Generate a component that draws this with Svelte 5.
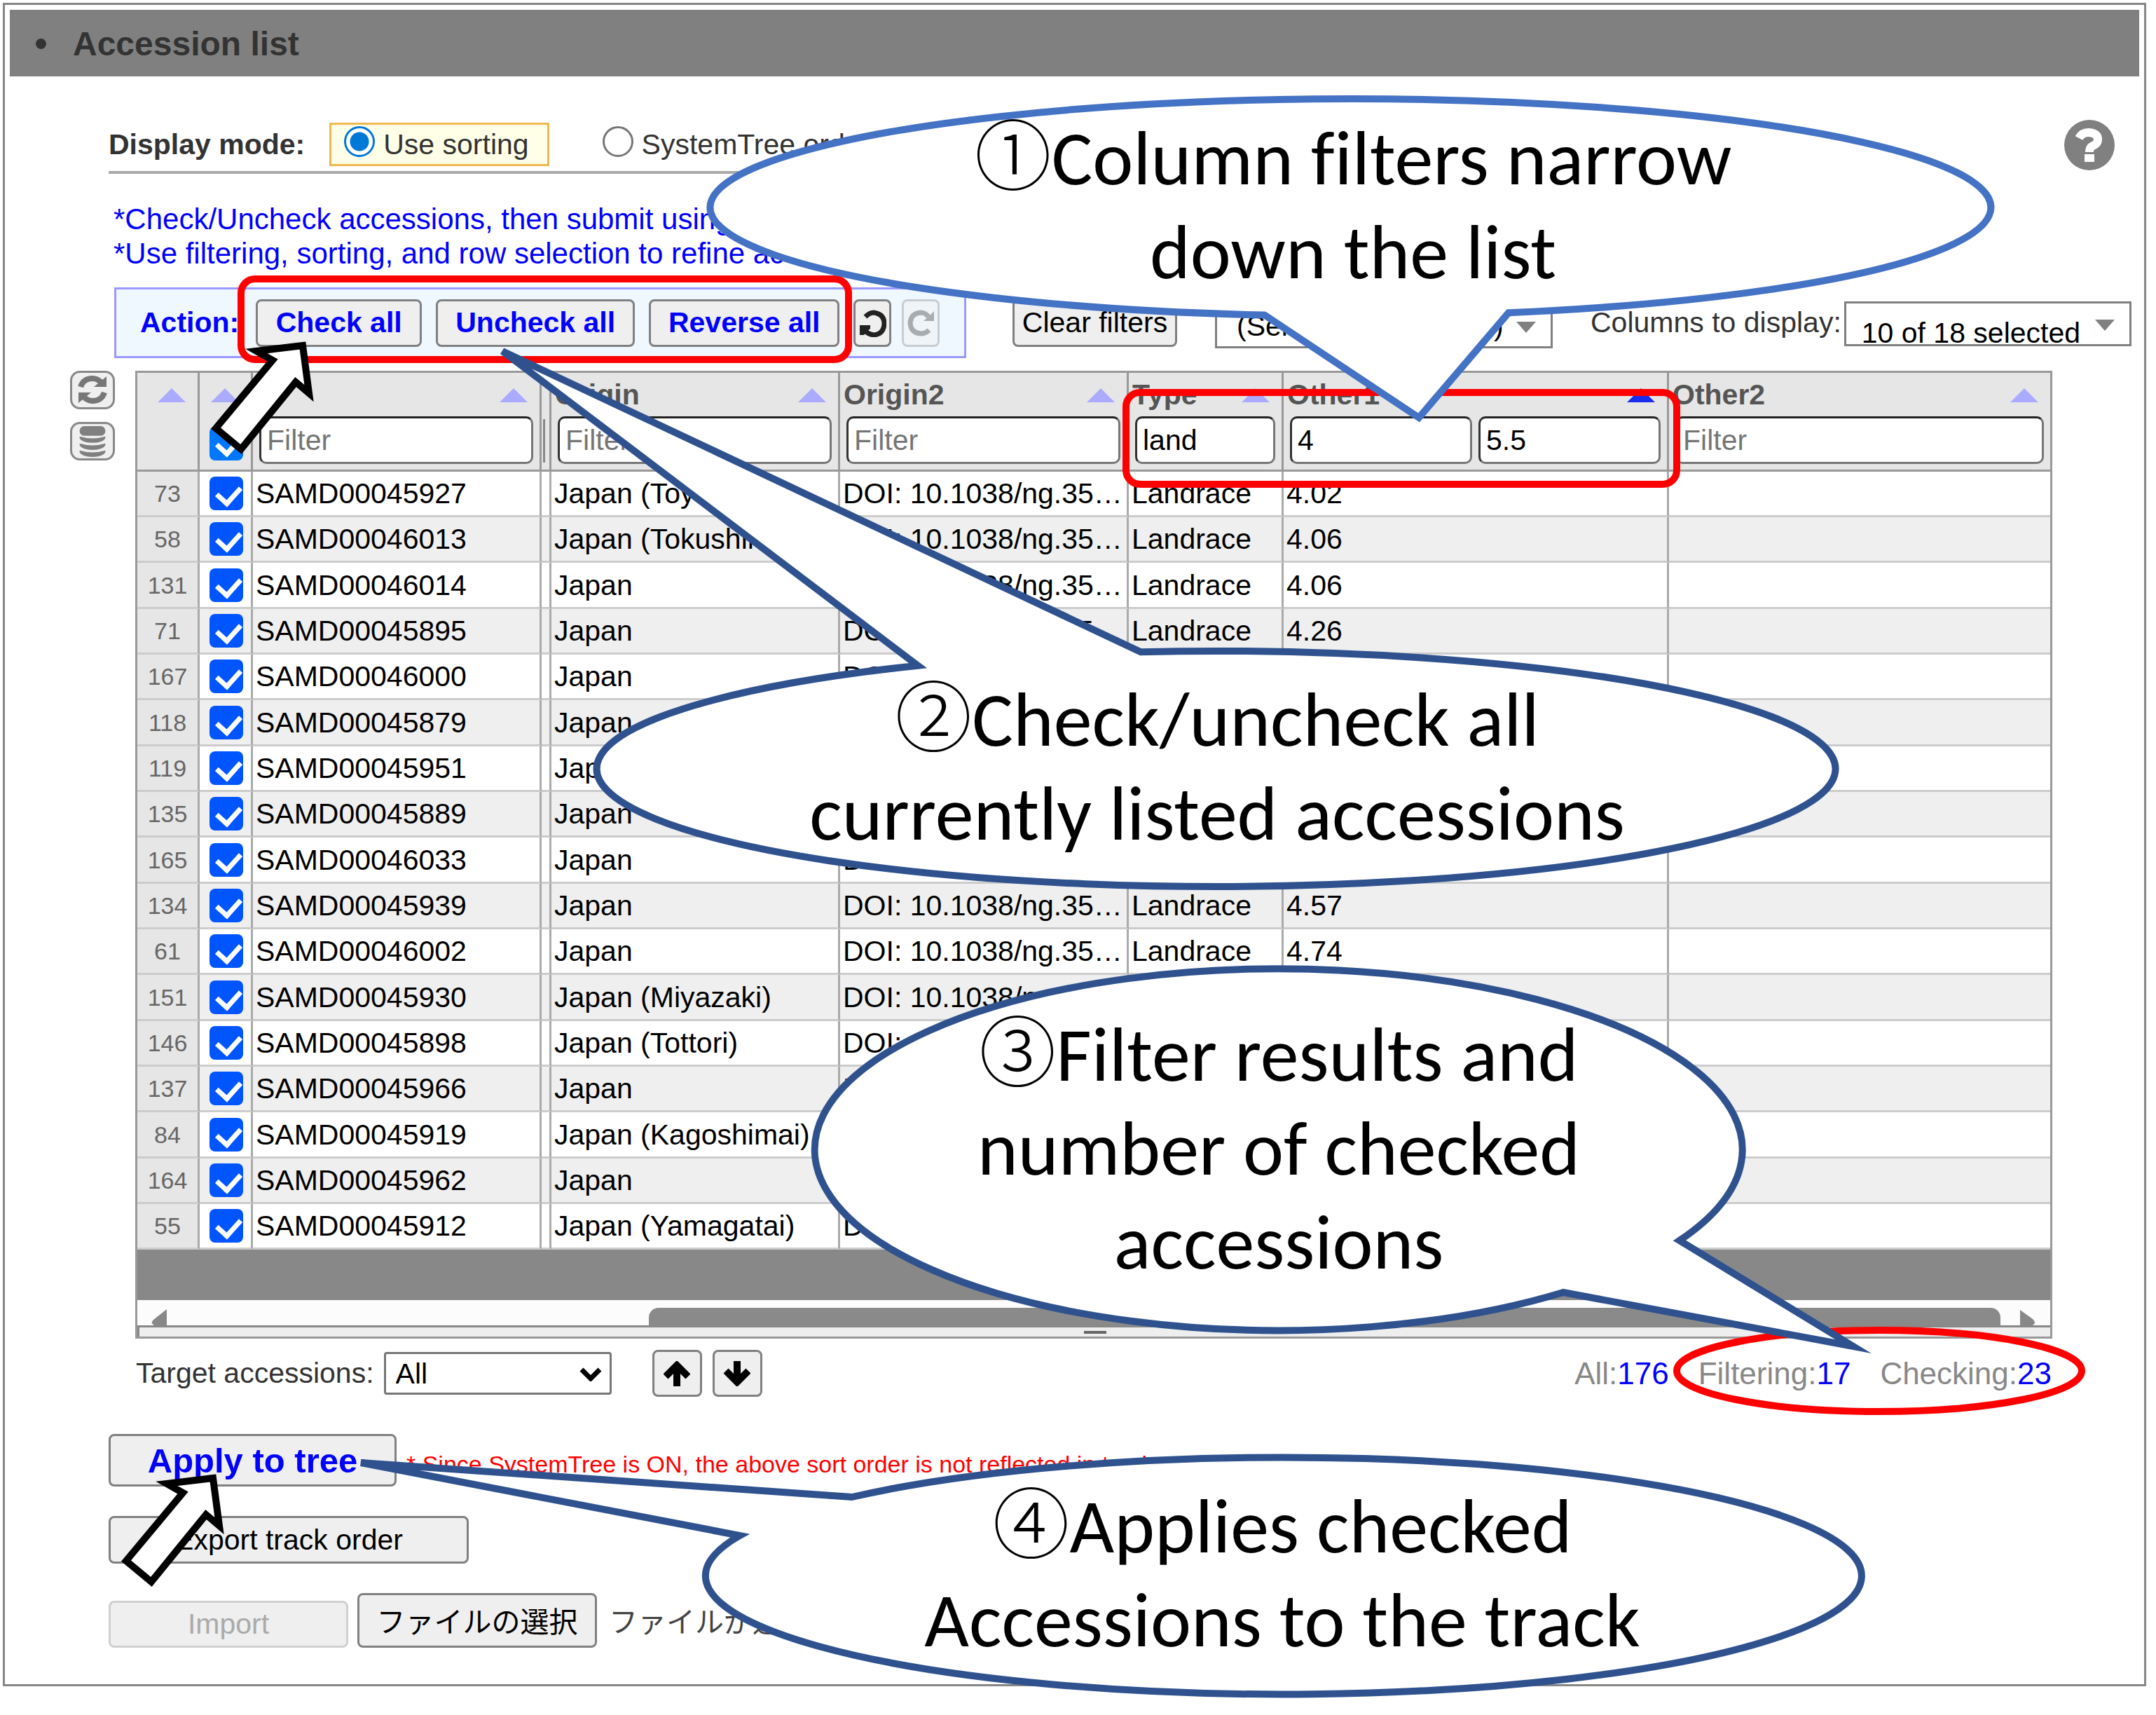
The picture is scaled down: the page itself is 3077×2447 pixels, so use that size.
<script lang="ts">
	type Row = { no: number; name: string; origin: string; value: string };

	const rows: Row[] = [
		{ no: 73, name: 'SAMD00045927', origin: 'Japan (Toyama)', value: '4.02' },
		{ no: 58, name: 'SAMD00046013', origin: 'Japan (Tokushima)', value: '4.06' },
		{ no: 131, name: 'SAMD00046014', origin: 'Japan', value: '4.06' },
		{ no: 71, name: 'SAMD00045895', origin: 'Japan', value: '4.26' },
		{ no: 167, name: 'SAMD00046000', origin: 'Japan', value: '' },
		{ no: 118, name: 'SAMD00045879', origin: 'Japan', value: '' },
		{ no: 119, name: 'SAMD00045951', origin: 'Japan', value: '' },
		{ no: 135, name: 'SAMD00045889', origin: 'Japan', value: '' },
		{ no: 165, name: 'SAMD00046033', origin: 'Japan', value: '' },
		{ no: 134, name: 'SAMD00045939', origin: 'Japan', value: '4.57' },
		{ no: 61, name: 'SAMD00046002', origin: 'Japan', value: '4.74' },
		{ no: 151, name: 'SAMD00045930', origin: 'Japan (Miyazaki)', value: '' },
		{ no: 146, name: 'SAMD00045898', origin: 'Japan (Tottori)', value: '' },
		{ no: 137, name: 'SAMD00045966', origin: 'Japan', value: '' },
		{ no: 84, name: 'SAMD00045919', origin: 'Japan (Kagoshimai)', value: '' },
		{ no: 164, name: 'SAMD00045962', origin: 'Japan', value: '' },
		{ no: 55, name: 'SAMD00045912', origin: 'Japan (Yamagatai)', value: '' },
	];

	let mode = $state('sorting');
	let typeFilter = $state('land');
	let min = $state('4');
	let max = $state('5.5');
</script>

{#snippet sortMark(active: boolean)}
	<svg class="sort" class:active viewBox="0 0 40 20" aria-hidden="true"><path d="M20 0L40 20H0z" /></svg>
{/snippet}

{#snippet pointer()}
	<path d="M432 493L366 501L389 514L308 611L344 641L422 545L441 561z" />
{/snippet}

<main class="frame">
	<header><span class="bullet"></span><h1>Accession list</h1></header>

	<section class="top">
		<div class="mode">
			<b>Display mode:</b>
			<label class="option" class:on={mode === 'sorting'}>
				<input type="radio" name="mode" value="sorting" bind:group={mode} />Use sorting
			</label>
			<label class="option" class:on={mode === 'tree'}>
				<input type="radio" name="mode" value="tree" bind:group={mode} />SystemTree order
			</label>
		</div>
		<button class="help" aria-label="Help">
			<svg viewBox="0 0 72 72">
				<circle cx="36" cy="36" r="36" fill="#808080" />
				<path d="M21 26Q25 18 35 18Q48 19 48 28Q48 34 41 37Q36 39 36 46" fill="none" stroke="#fff" stroke-width="12" />
				<rect x="29" y="49" width="14" height="11" fill="#fff" />
			</svg>
		</button>
	</section>

	<p class="hints">
		*Check/Uncheck accessions, then submit using "Apply to tree".<br />
		*Use filtering, sorting, and row selection to refine accessions.
	</p>

	<section class="toolbar">
		<div class="actions">
			<b>Action:</b>
			<button class="strong w-check">Check all</button>
			<button class="strong w-uncheck">Uncheck all</button>
			<button class="strong w-reverse">Reverse all</button>
			<div class="history">
				<button aria-label="Undo">
					<svg viewBox="0 0 40 40"><path d="M10 11Q16 5 22 5Q37 7 37 21Q36 36 22 37Q14 36 10 31" /><path class="head" d="M2 23H17V28L12 32L8 37H2z" /></svg>
				</button>
				<button aria-label="Redo" disabled>
					<svg viewBox="0 0 40 40"><path d="M32 30Q27 35 20 35Q6 34 5 20Q6 6 20 5Q27 5 31 11" /><path class="head" d="M39 3V17H24L31 11z" /></svg>
				</button>
			</div>
		</div>
		<button class="clear">Clear filters</button>
		<div class="drop preset">
			<select aria-label="Saved selection"><option>(Selected accession)</option></select>
			<svg viewBox="0 0 28 16" aria-hidden="true"><path d="M0 0H28L14 16z" /></svg>
		</div>
		<label for="columns">Columns to display:</label>
		<div class="drop columns">
			<select id="columns"><option>10 of 18 selected</option></select>
			<svg viewBox="0 0 28 16" aria-hidden="true"><path d="M0 0H28L14 16z" /></svg>
		</div>
	</section>

	<section class="list">
		<div class="side">
			<button aria-label="Reload">
				<svg viewBox="0 0 48 44">
					<path d="M7 17Q11 5 24 5Q31 5 37 11M41 25Q37 37 24 37Q17 37 11 31" fill="none" stroke="#777" stroke-width="8" />
					<path d="M44 2V17H26zM4 40V25H22z" fill="#777" />
				</svg>
			</button>
			<button aria-label="Data source">
				<svg viewBox="0 0 48 48" fill="#808080">
					<rect x="4" y="0" width="40" height="15" rx="7" />
					<path d="M4 16Q24 22 44 16V19Q40 26 24 26Q8 26 4 19z" />
					<path d="M4 27Q24 33 44 27V30Q40 37 24 37Q8 37 4 30z" />
					<path d="M4 38Q24 44 44 38V41Q40 48 24 48Q8 48 4 41z" />
				</svg>
			</button>
		</div>
		<div class="grid">
			<table>
				<colgroup>
					<col class="c-no" /><col class="c-check" /><col class="c-text" /><col class="c-gap" />
					<col class="c-text" /><col class="c-text" /><col class="c-type" /><col class="c-range" /><col />
				</colgroup>
				<thead>
					<tr>
						<th><div class="title">{@render sortMark(false)}</div></th>
						<th>
							<div class="title">{@render sortMark(false)}</div>
							<div class="all"><input type="checkbox" checked aria-label="Check every row" /></div>
						</th>
						<th>
							<div class="title">{@render sortMark(false)}</div>
							<div class="filters"><input type="text" placeholder="Filter" aria-label="Filter name" /></div>
						</th>
						<th><div class="title"></div><div class="sliver"></div></th>
						<th>
							<div class="title">Origin{@render sortMark(false)}</div>
							<div class="filters"><input type="text" placeholder="Filter" aria-label="Filter Origin" /></div>
						</th>
						<th>
							<div class="title">Origin2{@render sortMark(false)}</div>
							<div class="filters"><input type="text" placeholder="Filter" aria-label="Filter Origin2" /></div>
						</th>
						<th>
							<div class="title">Type{@render sortMark(false)}</div>
							<div class="filters"><input type="text" bind:value={typeFilter} aria-label="Filter Type" /></div>
						</th>
						<th>
							<div class="title">Other1{@render sortMark(true)}</div>
							<div class="filters">
								<input type="text" bind:value={min} aria-label="Other1 from" />
								<input type="text" bind:value={max} aria-label="Other1 to" />
							</div>
						</th>
						<th>
							<div class="title">Other2{@render sortMark(false)}</div>
							<div class="filters"><input type="text" placeholder="Filter" aria-label="Filter Other2" /></div>
						</th>
					</tr>
				</thead>
				<tbody>
					{#each rows as row (row.no)}
						<tr>
							<td class="no">{row.no}</td>
							<td class="check"><input type="checkbox" checked aria-label={row.name} /></td>
							<td>{row.name}</td>
							<td></td>
							<td>{row.origin}</td>
							<td>DOI: 10.1038/ng.35…</td>
							<td>Landrace</td>
							<td>{row.value}</td>
							<td></td>
						</tr>
					{/each}
				</tbody>
			</table>
			<div class="blank"></div>
			<div class="scroll">
				<svg viewBox="0 0 22 36" aria-hidden="true"><path d="M22 13V36H4Q-2 33 3 28Z" /></svg>
				<div class="thumb"></div>
				<svg viewBox="0 0 22 36" aria-hidden="true"><path d="M0 14V36H18Q24 33 18 27Z" /></svg>
			</div>
			<div class="resizer"><span></span></div>
		</div>
	</section>

	<section class="status">
		<label for="target">Target accessions:</label>
		<div class="target">
			<select id="target"><option>All</option></select>
			<svg viewBox="0 0 32 20" aria-hidden="true"><path d="M3 3L16 16L29 3" /></svg>
		</div>
		<div class="move">
			<button aria-label="Move up"><svg viewBox="0 0 38 36"><path d="M19 36V6M3 22L19 6L35 22" /></svg></button>
			<button aria-label="Move down"><svg viewBox="0 0 38 36"><path d="M19 0V30M3 14L19 30L35 14" /></svg></button>
		</div>
		<div class="counts">
			<span>All:<em>176</em></span>
			<span>Filtering:<em>17</em></span>
			<span>Checking:<em>23</em></span>
		</div>
	</section>

	<section class="submit">
		<div class="line">
			<button class="apply">Apply to tree</button>
			<span class="note">* Since SystemTree is ON, the above sort order is not reflected in track order.</span>
		</div>
		<button class="export">Export track order</button>
		<div class="files">
			<button class="import" disabled>Import</button>
			<label class="pick" for="file">ファイルの選択</label>
			<input id="file" type="file" class="hidden" />
			<span>ファイルが選択されていません</span>
		</div>
	</section>
</main>

<!-- annotations over the screen -->
<div class="notes">
	<svg viewBox="0 0 3077 2447">
		<g class="mark">
			<rect x="344" y="398" width="867" height="115" rx="20" />
			<rect x="1607" y="560" width="786" height="131" rx="20" />
			<ellipse cx="2682" cy="1956" rx="289" ry="58" />
		</g>
		<g class="bubble">
			<path class="light" d="M1805 449.6L2025 596L2153 446.2A914 155 0 1 0 1805 449.6z" />
			<path d="M1310 949.7L717 501L1628 930.2A884 168 0 1 1 1310 949.7z" />
			<path d="M2231 1844L2645 1921L2397 1770A662 258 0 1 0 2231 1844z" />
			<path d="M1216 2136L515 2087L1056 2191A825 169 0 1 0 1216 2136z" />
		</g>
		<g class="pointer">
			{@render pointer()}
			<g transform="translate(-128 1616)">{@render pointer()}</g>
		</g>
	</svg>
	<p class="n1"><i>①</i>Column filters narrow<br />down the list</p>
	<p class="n2"><i>②</i>Check/uncheck all<br />currently listed accessions</p>
	<p class="n3"><i>③</i>Filter results and<br />number of checked<br />accessions</p>
	<p class="n4"><i>④</i>Applies checked<br />Accessions to the track</p>
</div>

<style>
	:global(body) {
		background: #fff;
		font-family: 'Liberation Sans', Arial, 'Noto Sans CJK JP', sans-serif;
		font-size: 41px;
		color: #333;
	}
	:global(#app) { position: relative; display: flow-root; }

	* { box-sizing: border-box; }

	button, input, select { font: inherit; margin: 0; }

	button, .pick {
		padding: 0;
		border: 3px solid #808080;
		border-radius: 8px;
		background: #efefef;
		color: #000;
		text-align: center;
	}
	button:disabled { border-color: #d0d0d0; color: #aaa; }

	.frame {
		margin: 4px 14px 40px 4px;
		padding: 7px 7px 52px;
		border: 3px solid #868686;
	}

	header {
		display: flex;
		align-items: center;
		height: 95px;
		padding: 2px 0 0 37px;
		background: #808080;
	}
	.bullet { width: 15px; height: 15px; margin-right: 38px; border-radius: 50%; background: #333; }
	h1 { margin: 0; font-size: 48px; line-height: 56px; }

	.top {
		display: flex;
		justify-content: space-between;
		padding: 62px 35px 0 141px;
	}
	.mode {
		display: flex;
		align-items: center;
		gap: 35px;
		padding: 4px 60px 7px 0;
		border-bottom: 4px solid #aaa;
		white-space: nowrap;
	}
	.option {
		display: flex;
		align-items: center;
		gap: 12px;
		height: 62px;
		padding: 0 26px 0 18px;
		border: 3px solid transparent;
	}
	.option + .option { margin-left: 20px; }
	.option.on { border-color: #f0b850; background: #ffffe8; }
	.option input {
		appearance: none;
		width: 44px;
		height: 44px;
		margin-bottom: 8px;
		border: 3px solid #767676;
		border-radius: 50%;
		background: #fff;
	}
	.option input:checked {
		border-color: #0078d7;
		background: radial-gradient(circle, #0078d7 13px, #fff 14px);
	}
	.help { width: 72px; height: 72px; border: 0; border-radius: 50%; background: none; }
	.help svg { display: block; }

	.hints { margin: 40px 0 24px 148px; font-size: 42px; line-height: 49px; color: #00f; }

	.toolbar {
		display: flex;
		align-items: center;
		padding: 0 11px 0 149px;
		white-space: nowrap;
	}
	.actions {
		display: flex;
		align-items: center;
		gap: 20px;
		width: 1216px;
		height: 101px;
		padding-left: 34px;
		border: 3px solid #99f;
		background: #f0f8ff;
		color: #00f;
	}
	.actions b { margin-right: 4px; }
	.actions button, .clear { height: 68px; }
	.actions .strong { font-weight: bold; color: #00f; }
	.w-check { width: 237px; }
	.w-uncheck { width: 284px; }
	.w-reverse { width: 272px; }
	.history { display: flex; gap: 15px; }
	.history button { width: 54px; }
	.history svg { display: block; width: 40px; height: 40px; margin: auto; fill: none; stroke: #222; stroke-width: 7; }
	.history .head { fill: #222; stroke: none; }
	.history button:disabled { opacity: 0.35; border-color: #808080; }
	.clear { width: 235px; margin: 0 54px 0 66px; }
	.drop { position: relative; }
	.drop select {
		appearance: none;
		width: 100%;
		height: 64px;
		border: 3px solid #808080;
		border-radius: 0;
		background: #fff;
		color: #000;
	}
	.drop svg { position: absolute; top: 26px; right: 24px; width: 28px; fill: #808080; }
	.preset { width: 482px; margin: 8px 54px 0 0; }
	.preset select { padding: 0 0 0 28px; }
	.columns { flex: 1; margin: 8px 0 0 4px; }
	.columns select { padding: 19px 0 0 22px; }

	.list {
		display: flex;
		gap: 29px;
		padding: 18px 124px 0 86px;
	}
	.side { display: flex; flex-direction: column; gap: 18px; }
	.side button { width: 64px; height: 55px; border-color: #888; border-radius: 14px; }
	.side svg { display: block; height: 44px; margin: auto; }

	.grid { flex: 1; border: 3px solid #999; background: #fff; }
	table {
		width: 100%;
		table-layout: fixed;
		border-spacing: 0;
	}
	.c-no { width: 89px; }
	.c-check { width: 76px; }
	.c-text { width: 412px; }
	.c-gap { width: 14px; }
	.c-type { width: 221px; }
	.c-range { width: 550px; }

	th {
		padding: 0;
		vertical-align: top;
		text-align: left;
		border-right: 3px solid #999;
		border-bottom: 3px solid #999;
		background: #e6e6e6;
		color: #555;
	}
	th:last-child, td:last-child { border-right: 0; }
	.title {
		display: flex;
		align-items: center;
		justify-content: space-between;
		height: 62px;
		padding: 0 17px 0 5px;
	}
	.sort { width: 40px; height: 20px; margin: 2px 0 0 auto; fill: #aaf; }
	.sort.active { fill: #1a2cf0; }
	.filters { display: flex; gap: 9px; padding: 0 9px 8px; }
	.filters input {
		flex: 1;
		min-width: 0;
		height: 68px;
		padding: 0 8px;
		border: 3px solid #767676;
		border-top-color: #222;
		border-left-color: #333;
		border-radius: 10px;
		background: #fff;
		font-weight: normal;
		color: #000;
	}
	.filters input::placeholder { color: #757575; }
	.sliver { width: 3px; height: 62px; margin: 4px 0 0 2px; background: #888; }
	.all { padding: 15px 0 0 14px; }

	input[type='checkbox'] {
		appearance: none;
		display: block;
		width: 48px;
		height: 48px;
		border-radius: 8px;
		background: #05f;
	}
	.all input[type='checkbox'] { background: #07f; }
	input[type='checkbox']:checked::after {
		content: '';
		display: block;
		width: 16px;
		height: 26px;
		margin: 7px 0 0 16px;
		border: solid #fff;
		border-width: 0 7px 7px 0;
		transform: rotate(42deg);
	}

	td {
		height: 65px;
		padding: 0 0 0 4px;
		border-right: 3px solid #aaa;
		border-bottom: 3px solid #ccc;
		line-height: 50px;
		color: #000;
		white-space: nowrap;
		overflow: hidden;
	}
	tr:nth-child(3n) td { height: 66px; }
	tbody tr:nth-child(even) { background: #efefef; }
	td.no { padding: 0; background: #e6e6e6; font-size: 34px; text-align: center; color: #666; }
	td.check { padding: 0 0 0 14px; }

	.blank { height: 72px; background: #888; }
	.scroll {
		display: flex;
		align-items: flex-end;
		justify-content: space-between;
		height: 36px;
		padding: 0 21px 0 20px;
		background: #fcfcfc;
	}
	.scroll svg { width: 22px; height: 36px; fill: #888; }
	.thumb { flex: 1; height: 25px; margin: 0 28px 0 688px; border-radius: 14px 14px 0 0; background: #8a8a8a; }
	.resizer {
		display: flex;
		align-items: center;
		justify-content: center;
		height: 16px;
		border-top: 3px solid #888;
		border-left: 3px solid #888;
		background: #eee;
	}
	.resizer span { width: 32px; height: 4px; background: #666; }

	.status {
		display: flex;
		align-items: center;
		padding: 16px 125px 0 180px;
	}
	.target { position: relative; width: 325px; margin: 0 58px 0 14px; }
	.target select {
		appearance: none;
		display: block;
		width: 100%;
		height: 61px;
		padding: 0 14px;
		border: 3px solid #767676;
		border-radius: 4px;
		background: #fff;
		color: #000;
	}
	.target svg { position: absolute; top: 22px; right: 14px; width: 32px; fill: none; stroke: #000; stroke-width: 7; }
	.move { display: flex; gap: 15px; }
	.move button { width: 71px; height: 67px; }
	.move svg { display: block; width: 38px; margin: auto; fill: none; stroke: #000; stroke-width: 10; }
	.counts { display: flex; gap: 42px; margin-left: auto; font-size: 44px; color: #888; }
	.counts em { font-style: normal; color: #00f; }

	.submit {
		display: flex;
		flex-direction: column;
		align-items: flex-start;
		gap: 42px;
		padding: 53px 0 0 141px;
	}
	.line { display: flex; align-items: baseline; gap: 14px; }
	.apply { width: 411px; height: 75px; font-size: 49px; font-weight: bold; color: #00f; }
	.note { font-size: 34px; color: #f00; }
	.export { width: 514px; height: 68px; }
	.files { display: flex; align-items: flex-end; }
	.import { width: 342px; height: 67px; margin-right: 13px; }
	.pick { width: 342px; height: 78px; margin-right: 17px; line-height: 78px; }
	.files span { line-height: 84px; height: 78px; color: #444; }
	.hidden { position: absolute; width: 1px; height: 1px; opacity: 0; }

	.notes {
		position: absolute;
		top: 0;
		left: 0;
		width: 3077px;
		pointer-events: none;
	}
	.notes svg { display: block; width: 100%; stroke-miterlimit: 8; }
	.mark { fill: none; stroke: #f00; stroke-width: 10; }
	.bubble { fill: #fff; stroke: #2f528f; stroke-width: 10; }
	.light { stroke: #4472c4; }
	.pointer { fill: #fff; stroke: #000; stroke-width: 10; }
	.notes p {
		position: absolute;
		width: 1300px;
		margin: 0;
		font-family: Carlito, Lato, 'Noto Sans CJK JP', sans-serif;
		font-size: 110px;
		font-variant-ligatures: none;
		line-height: 134px;
		text-align: center;
		color: #000;
	}
	.notes i { font: 300 110px/100px 'Noto Sans CJK JP', sans-serif; }
	.n1 { top: 159px; left: 1281px; }
	.n2 { top: 960px; left: 1087px; }
	.n3 { top: 1438px; left: 1175px; }
	.n4 { top: 2111px; left: 1180px; }
</style>
